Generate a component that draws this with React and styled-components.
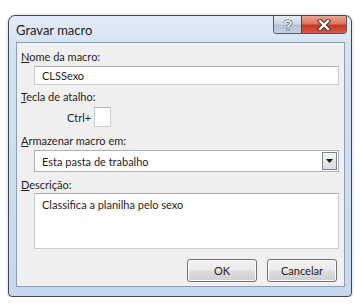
import styled, { createGlobalStyle } from "styled-components";

const Global = createGlobalStyle`
  body {
    margin: 0;
    background: #ffffff;
    font-family: Lato, "Open Sans", sans-serif;
  }
`;

const Window = styled.div`
  box-sizing: border-box;
  margin: 15px 0 0 8px;
  width: 344px;
  height: 282px;
  border: 1px solid #40474f;
  border-radius: 7px 7px 4px 4px;
  background: linear-gradient(180deg, #e2ecf7 0%, #d3e2f2 12%, #c6d9ee 100%);
  box-shadow: 0 0 3px rgba(0, 0, 0, 0.25);
  display: flex;
  flex-direction: column;
  padding: 0 6px 9px 7px;
`;

const TitleBar = styled.div`
  height: 26px;
  display: flex;
  align-items: flex-start;
  margin-right: -2px;
`;

const Title = styled.div`
  flex: 1;
  padding-top: 6px;
  font-size: 13px;
  line-height: 17px;
  color: #1e1e1e;
`;

const Caption = styled.div`
  display: flex;
  height: 17px;
  border: 1px solid #4f5b6a;
  border-top: none;
  border-radius: 0 0 4px 4px;
  overflow: hidden;
`;

const CapButton = styled.div`
  width: ${(p) => p.$w}px;
  display: flex;
  align-items: center;
  justify-content: center;
  background: ${(p) =>
    p.$close
      ? "linear-gradient(180deg, #eba493 0%, #de7660 45%, #c63a22 55%, #d6593b 100%)"
      : "linear-gradient(180deg, #e4ebf3 0%, #cfd9e5 45%, #b3c1d2 55%, #c4d1e0 100%)"};
  border-left: ${(p) => (p.$close ? "1px solid #6b3b36" : "none")};
`;

const Client = styled.div`
  flex: 1;
  background: #f0f0f0;
  border: 1px solid #8d9db2;
  display: flex;
  flex-direction: column;
  padding: 0 5px 0 4px;
  font-size: 11px;
  color: #1e1e1e;
`;

const Label = styled.div`
  line-height: 16px;
  margin-top: ${(p) => p.$mt}px;
`;

const Field = styled.div`
  box-sizing: border-box;
  margin-left: 13px;
  margin-top: ${(p) => p.$mt || 0}px;
  height: ${(p) => p.$h}px;
  background: #ffffff;
  border: 1px solid #c9cdd2;
  border-top-color: #abadb3;
  padding: ${(p) => p.$pad || "1px 7px"};
  line-height: 15px;
  display: flex;
  align-items: ${(p) => (p.$top ? "flex-start" : "center")};
`;

const ShortcutRow = styled.div`
  display: flex;
  align-items: center;
  margin-top: 2px;
  height: 20px;
  padding-left: 46px;
  gap: 3px;
`;

const KeyBox = styled.div`
  box-sizing: border-box;
  width: 17px;
  height: 20px;
  background: #ffffff;
  border: 1px solid #c9cdd2;
  border-top-color: #abadb3;
`;

const Combo = styled.div`
  box-sizing: border-box;
  margin: 1px 0 0 13px;
  height: 22px;
  background: #ffffff;
  border: 1px solid #adb2b8;
  display: flex;
  align-items: center;
  padding: 0 1px 0 7px;
`;

const ComboText = styled.div`
  flex: 1;
`;

const ComboArrow = styled.div`
  box-sizing: border-box;
  width: 15px;
  height: 18px;
  border: 1px solid #7c8490;
  background: linear-gradient(180deg, #f4f4f4, #dcdcdc);
  display: flex;
  align-items: center;
  justify-content: center;
`;

const Buttons = styled.div`
  display: flex;
  justify-content: flex-end;
  gap: 10px;
  margin-top: 10px;
  padding-right: 2px;
`;

const Button = styled.div`
  box-sizing: border-box;
  width: 70px;
  height: 23px;
  border: 1px solid #707070;
  border-radius: 3px;
  background: linear-gradient(180deg, #f2f2f2 0%, #ebebeb 48%, #dddddd 52%, #cfcfcf 100%);
  box-shadow: inset 0 0 0 1px #fcfcfc;
  display: flex;
  align-items: center;
  justify-content: center;
  line-height: 15px;
`;

export default function App() {
  return (
    <>
      <Global />
      <Window>
        <TitleBar>
          <Title>Gravar macro</Title>
          <Caption>
            <CapButton $w={27}>
              <svg width="10" height="12" viewBox="0 0 10 12">
                <path
                  d="M2 4 C2 1.5 8 1.2 8 4 C8 5.8 5 6 5 8"
                  fill="none"
                  stroke="#6a7685"
                  strokeWidth="3.2"
                />
                <path
                  d="M2 4 C2 1.5 8 1.2 8 4 C8 5.8 5 6 5 8"
                  fill="none"
                  stroke="#f4f6f9"
                  strokeWidth="1.6"
                />
                <rect x="3.4" y="9" width="3.2" height="3" fill="#6a7685" />
                <rect x="4.2" y="9.6" width="1.6" height="1.8" fill="#f4f6f9" />
              </svg>
            </CapButton>
            <CapButton $w={44} $close>
              <svg width="14" height="12" viewBox="0 0 14 12">
                <path d="M3 2 L11 10 M11 2 L3 10" stroke="#4d2a22" strokeWidth="4.4" strokeLinecap="square" />
                <path d="M3 2 L11 10 M11 2 L3 10" stroke="#ffffff" strokeWidth="2.4" strokeLinecap="square" />
              </svg>
            </CapButton>
          </Caption>
        </TitleBar>
        <Client>
          <Label $mt={6}>
            <u>N</u>ome da macro:
          </Label>
          <Field $h={19} $mt={1}>CLSSexo</Field>
          <Label $mt={4}>
            <u>T</u>ecla de atalho:
          </Label>
          <ShortcutRow>
            <span>Ctrl+</span>
            <KeyBox />
          </ShortcutRow>
          <Label $mt={6}>
            <u>A</u>rmazenar macro em:
          </Label>
          <Combo>
            <ComboText>Esta pasta de trabalho</ComboText>
            <ComboArrow>
              <svg width="7" height="4" viewBox="0 0 7 4">
                <path d="M0 0 H7 L3.5 4 Z" fill="#1a1a1a" />
              </svg>
            </ComboArrow>
          </Combo>
          <Label $mt={5}>
            <u>D</u>escrição:
          </Label>
          <Field $h={56} $top $pad="3px 7px">
            Classifica a planilha pelo sexo
          </Field>
          <Buttons>
            <Button>OK</Button>
            <Button>Cancelar</Button>
          </Buttons>
        </Client>
      </Window>
    </>
  );
}
